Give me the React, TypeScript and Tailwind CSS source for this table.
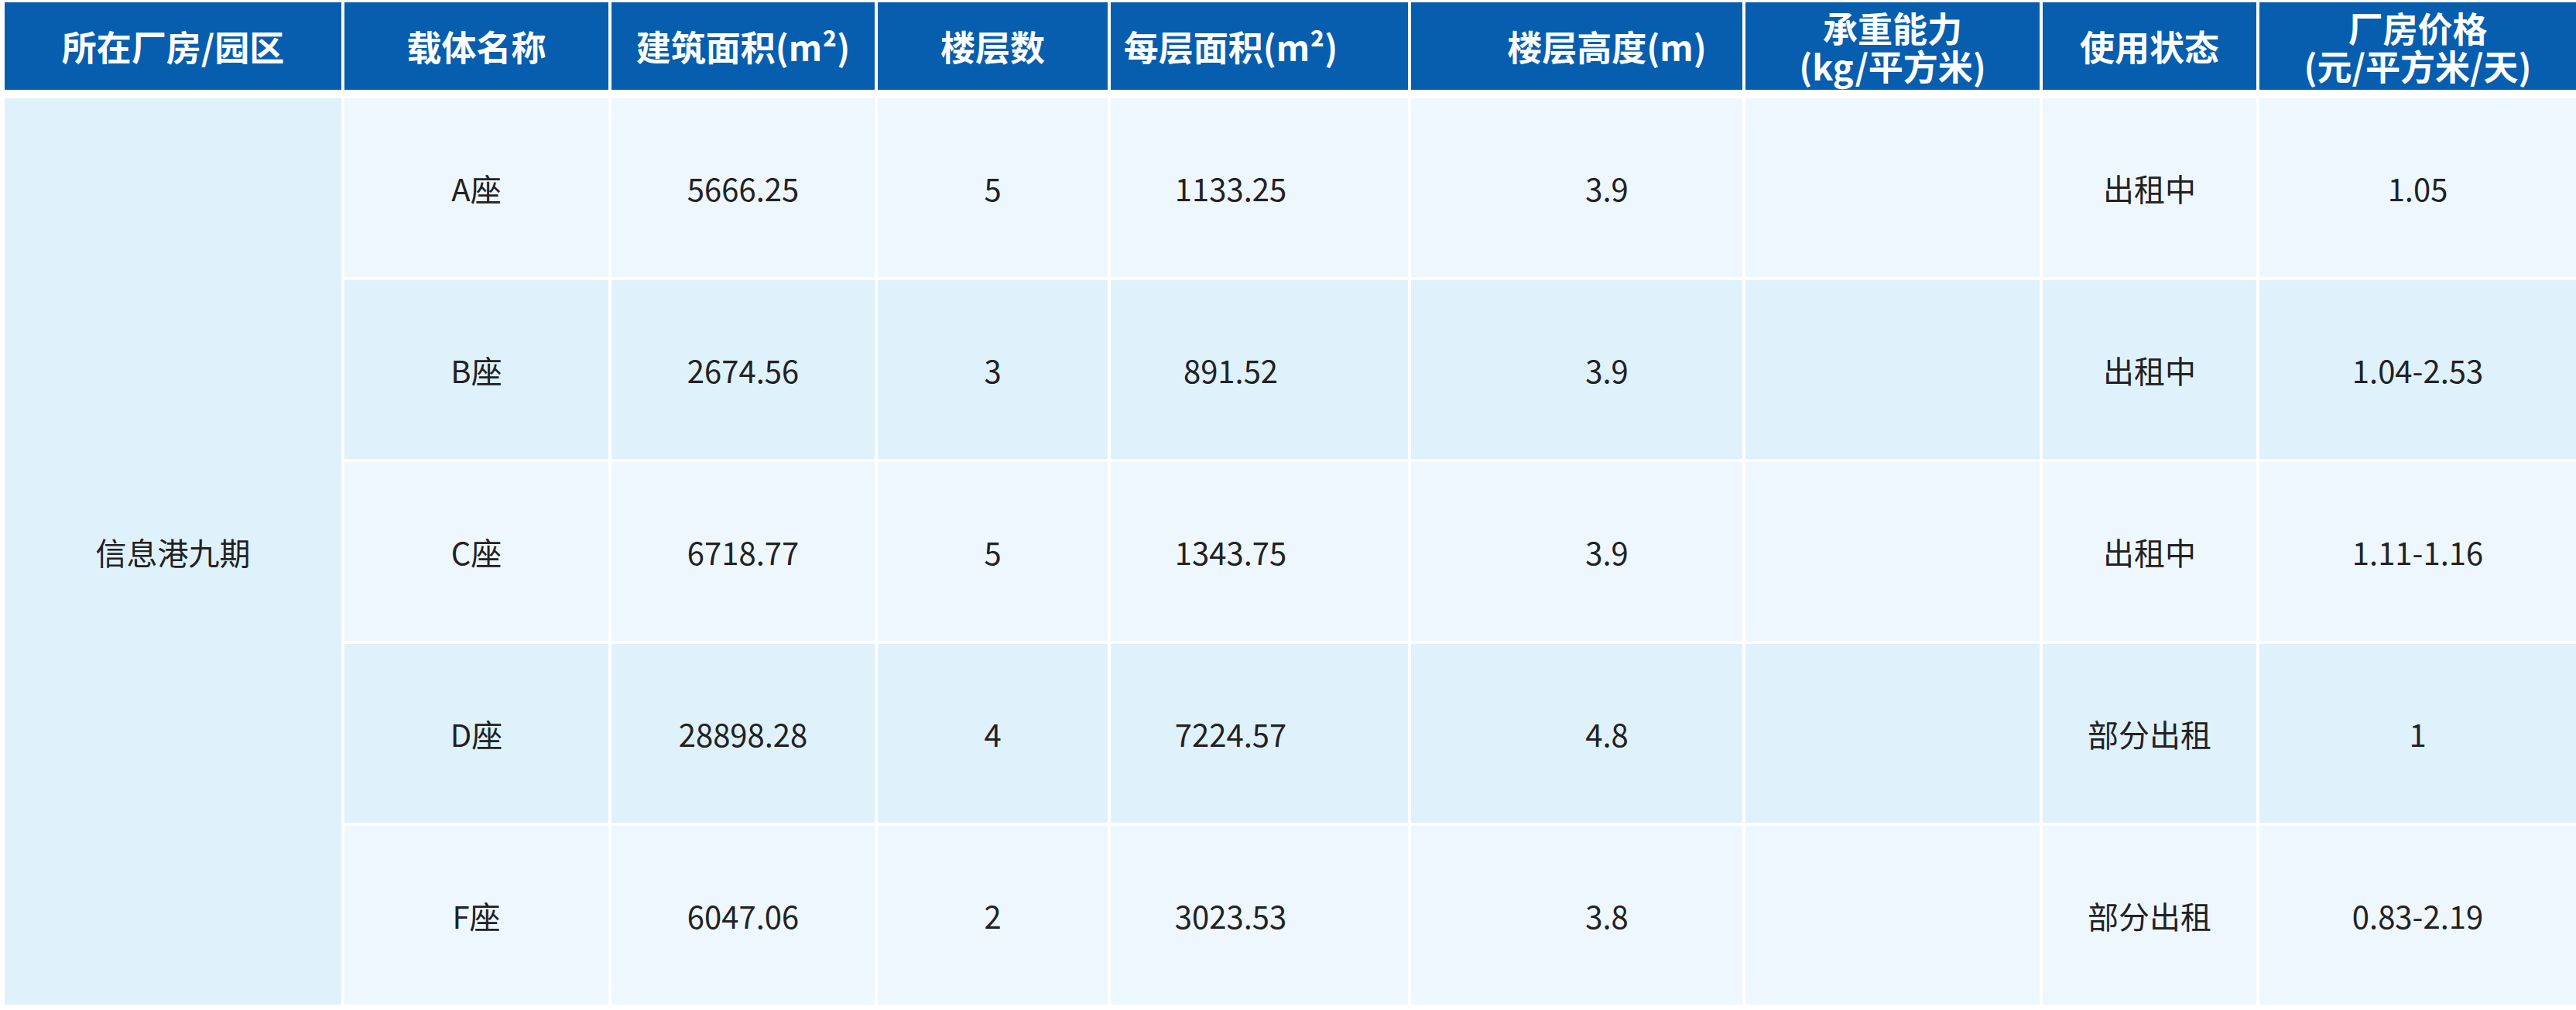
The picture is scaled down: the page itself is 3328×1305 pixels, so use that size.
import React from "react";

const cols =
  "grid grid-cols-[435px_341px_340px_297px_384px_428px_380px_276px_409px] gap-x-[4px]";

const headers: { lines: string[]; extra?: string }[] = [
  { lines: ["所在厂房/园区"] },
  { lines: ["载体名称"] },
  { lines: ["建筑面积(m²)"] },
  { lines: ["楼层数"] },
  { lines: ["每层面积(m²)"], extra: "pr-[74px]" },
  { lines: ["楼层高度(m)"], extra: "pl-[78px]" },
  { lines: ["承重能力", "(kg/平方米)"] },
  { lines: ["使用状态"] },
  { lines: ["厂房价格", "(元/平方米/天)"] },
];

const rows = [
  ["A座", "5666.25", "5", "1133.25", "3.9", "", "出租中", "1.05"],
  ["B座", "2674.56", "3", "891.52", "3.9", "", "出租中", "1.04-2.53"],
  ["C座", "6718.77", "5", "1343.75", "3.9", "", "出租中", "1.11-1.16"],
  ["D座", "28898.28", "4", "7224.57", "4.8", "", "部分出租", "1"],
  ["F座", "6047.06", "2", "3023.53", "3.8", "", "部分出租", "0.83-2.19"],
];

const cellPad = ["", "", "", "pr-[74px]", "pl-[78px]", "", "", ""];

export default function App() {
  return (
    <div
      className="w-[3328px] h-[1305px] bg-white overflow-hidden pl-[6px] pt-[3px]"
      style={{ fontFamily: '"Noto Sans CJK SC", "Noto Sans", sans-serif' }}
    >
      <div className={cols}>
        {headers.map((h, i) => (
          <div
            key={i}
            className={`h-[113px] bg-[#075eae] text-white font-bold text-[45px] leading-[49px] flex flex-col items-center justify-center text-center ${h.extra ?? ""}`}
          >
            {h.lines.map((l, j) => (
              <span key={j} className="whitespace-nowrap">
                {l}
              </span>
            ))}
          </div>
        ))}
      </div>
      <div className={`${cols} gap-y-[4px] mt-[11px]`}>
        <div className="row-span-5 bg-[#dff1fb] flex items-center justify-center text-[40px] text-[#222]">
          信息港九期
        </div>
        {rows.map((r, ri) =>
          r.map((c, ci) => (
            <div
              key={`${ri}-${ci}`}
              className={`h-[231px] flex items-center justify-center text-[40px] text-[#222] ${
                ri % 2 === 0 ? "bg-[#eef7fd]" : "bg-[#dff1fb]"
              } ${cellPad[ci]}`}
            >
              {c}
            </div>
          ))
        )}
      </div>
    </div>
  );
}
